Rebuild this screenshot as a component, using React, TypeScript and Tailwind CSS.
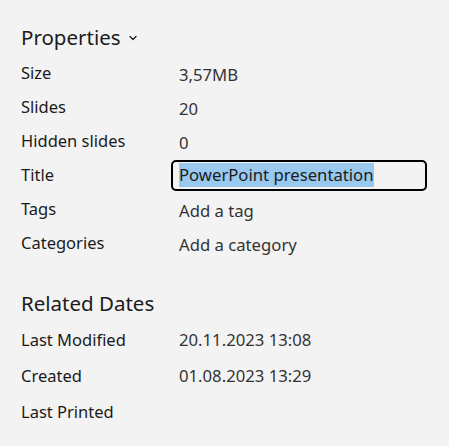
import { ChevronDown } from "lucide-react";

const props = [
  { label: "Size", value: "3,57MB" },
  { label: "Slides", value: "20" },
  { label: "Hidden slides", value: "0" },
  { label: "Title", value: "PowerPoint presentation", input: true },
  { label: "Tags", value: "Add a tag" },
  { label: "Categories", value: "Add a category" },
];

const dates = [
  { label: "Last Modified", value: "20.11.2023 13:08" },
  { label: "Created", value: "01.08.2023 13:29" },
  { label: "Last Printed", value: "" },
];

export default function App() {
  return (
    <div
      className="h-[446px] w-[449px] overflow-hidden bg-[#f3f3f3] pl-[21px] pt-[22px] text-[#1b1b1b]"
      style={{ fontFamily: '"Noto Sans", "Open Sans", sans-serif' }}
    >
      {/* Properties */}
      <div className="flex h-[30px] items-center gap-[6px]">
        <span className="text-[20.5px] leading-none">Properties</span>
        <ChevronDown size={12} strokeWidth={2.5} className="mt-[2px]" />
      </div>

      <div className="mt-[4px] flex flex-col">
        {props.map((p) => (
          <div key={p.label} className="flex h-[34px] items-center">
            <span className="w-[158px] text-[16.5px]">{p.label}</span>
            {p.input ? (
              <div className="-ml-[8px] flex h-[31px] w-[256px] items-center rounded-[5px] border-2 border-black px-[6px]">
                <span className="bg-[#99c9ef] text-[16.7px] leading-[24px] text-[#1b1b1b]">{p.value}</span>
              </div>
            ) : (
              <span className="mt-[3px] text-[16.7px] text-[#333]">{p.value}</span>
            )}
          </div>
        ))}
      </div>

      {/* Related Dates */}
      <div className="mt-[28px] flex h-[30px] items-center">
        <span className="text-[20.5px] leading-none">Related Dates</span>
      </div>

      <div className="mt-[4px] flex flex-col">
        {dates.map((d) => (
          <div key={d.label} className="flex h-[36px] items-center">
            <span className="w-[158px] text-[16.5px]">{d.label}</span>
            <span className="text-[16.7px] text-[#333]">{d.value}</span>
          </div>
        ))}
      </div>
    </div>
  );
}
